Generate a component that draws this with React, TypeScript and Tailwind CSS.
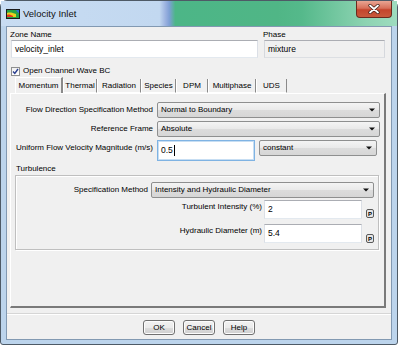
import React from 'react';

const font = "font-['Liberation_Sans',Arial,sans-serif]";

const Combo: React.FC<{ value: string; className: string }> = ({ value, className }) => (
  <div
    className={`flex items-center justify-between rounded-[2px] border border-[#8e8f8f] bg-[linear-gradient(#f4f4f4,#e9e9e9_50%,#dcdcdc_51%,#d6d6d6)] pl-[3px] pr-[4px] text-[8px] ${className}`}
  >
    <span>{value}</span>
    <svg width="6" height="4" viewBox="0 0 6 4">
      <path d="M0 0.5h6L3 3.5z" fill="#111" />
    </svg>
  </div>
);

const TextBox: React.FC<{ value: string; className: string }> = ({ value, className }) => (
  <div
    className={`flex items-center border border-[#abadb3] border-x-[#dbdfe6] border-b-[#e3e9ef] bg-white pl-[3px] text-[8.5px] ${className}`}
  >
    {value}
  </div>
);

const PButton: React.FC = () => (
  <div className="flex h-[9px] w-[8px] items-center justify-center rounded-[2px] border border-[#5a5a5a] bg-[#e6e6e6] text-[6px] leading-none font-bold">
    P
  </div>
);

const tabs = [
  { name: 'Momentum', w: 'w-[48px]' },
  { name: 'Thermal', w: 'w-[34px]' },
  { name: 'Radiation', w: 'w-[44px]' },
  { name: 'Species', w: 'w-[35px]' },
  { name: 'DPM', w: 'w-[32px]' },
  { name: 'Multiphase', w: 'w-[48px]' },
  { name: 'UDS', w: 'w-[31px]' },
];

const App: React.FC = () => {
  return (
    <div className={`${font} h-[345px] w-[398px] overflow-hidden bg-[#fff] text-black`}>
      <div className="flex h-[345px] w-[398px] flex-col rounded-t-[7px] rounded-b-[3px] border border-[#4e5a66] bg-[#bcd4ec]">
        {/* title bar */}
        <div className="flex h-[25px] items-start bg-[linear-gradient(90deg,#c8dcf2_0%,#c2d8f0_40%,#9cb3e0_41.5%,#7f9fd6_42.5%,#4cb687_44%,#50b686_70%,#55b98b_76%,#8dd3b2_92%,#9edcbf_100%)]">
          <div className="mt-[7px] ml-[5px] flex items-center gap-[3px]">
            <svg width="14" height="10" viewBox="0 0 14 10">
              <rect width="14" height="10" fill="#1c1c1c" />
              <rect x="1" y="1" width="12" height="8" fill="#25a347" />
              <path d="M1 4c3-1 6 0 9 1v3H1z" fill="#e8d21e" />
              <path d="M1 6c2-1 4 0 6 1v1H1z" fill="#e23a23" />
              <path d="M10 1h3v3c-1 0-2-1-3-3z" fill="#2e6fd8" />
            </svg>
            <span className="text-[9.5px] leading-[12px] text-[#111]">Velocity Inlet</span>
          </div>
          <div className="ml-auto mr-[5px] flex h-[17px] w-[36px] items-center justify-center rounded-b-[4px] border border-t-0 border-[#6b2a1e] bg-[linear-gradient(#e9a593,#d7705a_45%,#c4452c_55%,#c85a3c)]">
            <svg width="12" height="10" viewBox="0 0 12 10">
              <path d="M2 1.5l8 7M10 1.5l-8 7" stroke="#3a1a12" strokeWidth="3.2" strokeLinecap="round" />
              <path d="M2 1.5l8 7M10 1.5l-8 7" stroke="#fff" strokeWidth="1.8" strokeLinecap="round" />
            </svg>
          </div>
        </div>

        {/* client area */}
        <div className="mx-[5px] flex h-[314px] flex-col border border-[#8299b2] bg-[#f0f0f0]">
          {/* zone / phase */}
          <div className="flex gap-[5px] pt-[3px] pl-[3px]">
            <div className="flex w-[248px] flex-col">
              <span className="text-[8px] leading-[10px]">Zone Name</span>
              <TextBox value="velocity_inlet" className="ml-[1px] h-[18px] w-[247px]" />
            </div>
            <div className="flex w-[122px] flex-col">
              <span className="text-[8px] leading-[10px]">Phase</span>
              <div className="ml-[1px] flex h-[18px] w-[121px] items-center border border-[#abadb3] border-x-[#d5d8dd] border-b-[#dcdfe3] bg-[#f0f0f0] pl-[3px] text-[8.5px]">
                mixture
              </div>
            </div>
          </div>

          {/* checkbox */}
          <div className="mt-[8px] flex h-[10px] items-center gap-[3px] pl-[4px]">
            <div className="flex h-[9px] w-[9px] items-center justify-center border border-[#8e8f8f] bg-[linear-gradient(#f0f0f0,#fff)]">
              <svg width="7" height="7" viewBox="0 0 7 7">
                <path d="M1 3.6l1.8 1.9L6 1" stroke="#2a3f8f" strokeWidth="1.4" fill="none" />
              </svg>
            </div>
            <span className="text-[8px] leading-[10px]">Open Channel Wave BC</span>
          </div>

          {/* tabs */}
          <div className="mt-[1px] ml-[8px] flex h-[16px] items-end">
            {tabs.map((t, i) =>
              i === 0 ? (
                <div
                  key={t.name}
                  className={`${t.w} flex h-[16px] items-center justify-center border-l border-t border-r-2 border-l-[#fff] border-t-[#fff] border-r-[#8a8a8a] text-[8px]`}
                >
                  {t.name}
                </div>
              ) : (
                <div
                  key={t.name}
                  className={`${t.w} flex h-[14px] items-center justify-center border-r border-l border-r-[#8a8a8a] border-l-[#fff] border-b border-b-[#fff] text-[8px]`}
                >
                  {t.name}
                </div>
              )
            )}
          </div>

          {/* tab panel */}
          <div className="ml-[3px] flex h-[215px] w-[376px] flex-col border-l border-t border-r-2 border-b-2 border-l-[#fff] border-t-[#fff] border-r-[#7a7a7a] border-b-[#7a7a7a] pt-[8px]">
            <div className="flex h-[16px] items-center">
              <span className="w-[143px] pr-[1px] text-right text-[8px]">Flow Direction Specification Method</span>
              <Combo value="Normal to Boundary" className="ml-[3px] h-[16px] w-[223px]" />
            </div>
            <div className="mt-[3px] flex h-[16px] items-center">
              <span className="w-[143px] pr-[1px] text-right text-[8px]">Reference Frame</span>
              <Combo value="Absolute" className="ml-[3px] h-[16px] w-[223px]" />
            </div>
            <div className="mt-[3px] flex items-start">
              <span className="mt-[2px] w-[143px] pl-[5px] text-[8px]">Uniform Flow Velocity Magnitude (m/s)</span>
              <div className="ml-[3px] flex h-[21px] w-[98px] items-center border border-[#7fb3e3] bg-white pl-[3px] text-[8.5px] shadow-[inset_0_0_0_1px_#c7def3]">
                0.5
                <span className="ml-[1px] h-[11px] w-[1px] bg-black" />
              </div>
              <Combo value="constant" className="ml-[4px] h-[16px] w-[118px]" />
            </div>

            <span className="mt-[3px] pl-[5px] text-[8px] leading-[10px]">Turbulence</span>
            <div className="mt-[1px] ml-[4px] flex w-[364px] flex-col border border-[#bfbfbf] bg-[#f0f0f0] pt-[6px] pb-[6px] shadow-[inset_1px_1px_0_#fff,1px_1px_0_#fff]">
              <div className="flex h-[16px] items-center">
                <span className="w-[132px] text-right text-[8px]">Specification Method</span>
                <Combo value="Intensity and Hydraulic Diameter" className="ml-[3px] h-[16px] w-[223px]" />
              </div>
              <div className="mt-[2px] flex items-end">
                <span className="mb-[6px] w-[246px] text-right text-[8px]">Turbulent Intensity (%)</span>
                <TextBox value="2" className="ml-[2px] h-[19px] w-[98px]" />
                <div className="mb-[1px] ml-[4px]">
                  <PButton />
                </div>
              </div>
              <div className="mt-[5px] flex items-end">
                <span className="mb-[6px] w-[246px] text-right text-[8px]">Hydraulic Diameter (m)</span>
                <TextBox value="5.4" className="ml-[2px] h-[19px] w-[98px]" />
                <div className="mb-[0px] ml-[4px]">
                  <PButton />
                </div>
              </div>
            </div>
          </div>

          {/* separator */}
          <div className="mt-[5px] h-[2px] border-t border-b border-t-[#d6d6d6] border-b-[#fff]" />

          {/* buttons */}
          <div className="mt-[5px] flex justify-center gap-[8px]">
            {['OK', 'Cancel', 'Help'].map((b) => (
              <div
                key={b}
                className="flex h-[15px] w-[32px] items-center justify-center rounded-[3px] border border-[#707070] bg-[linear-gradient(#f2f2f2,#ebebeb_50%,#dddddd_51%,#cfcfcf)] text-[8px] shadow-[inset_0_0_0_1px_#fcfcfc]"
              >
                {b}
              </div>
            ))}
          </div>
        </div>
      </div>
    </div>
  );
};

export default App;
